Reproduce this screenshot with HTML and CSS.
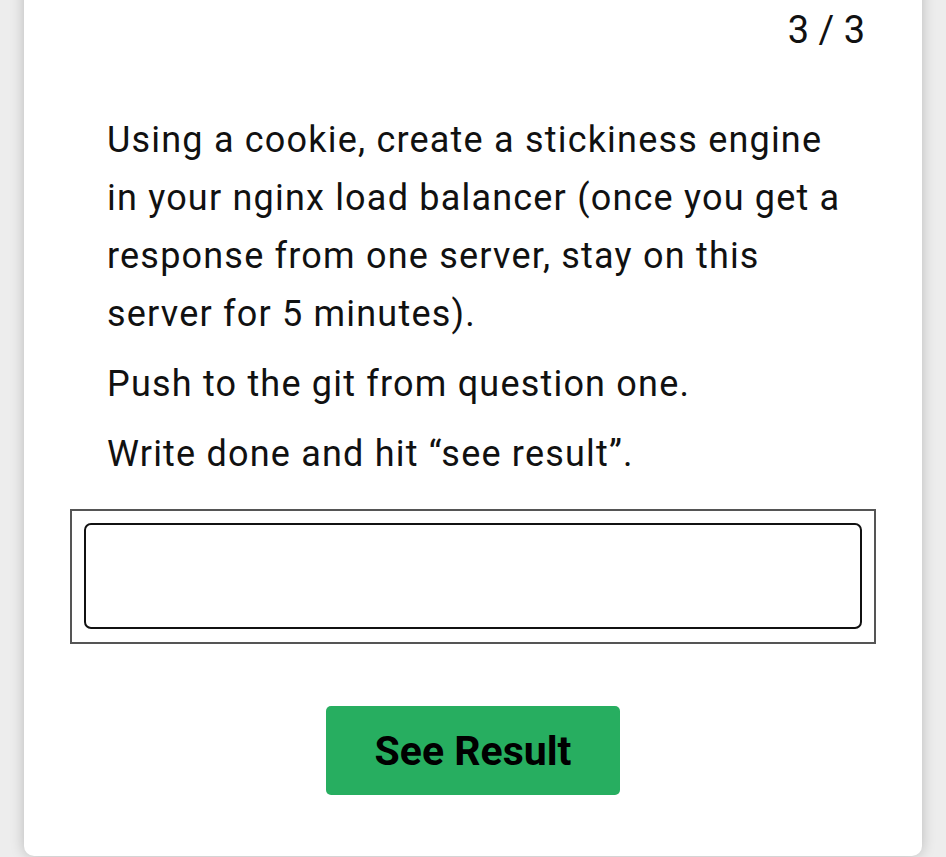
FILE: index.html
```html
<!DOCTYPE html>
<html lang="en">
<head>
<meta charset="utf-8">
<title>Question 3 / 3</title>
<link rel="stylesheet" href="styles.css">
</head>
<body>
  <main class="card">
    <div class="counter">3 / 3</div>
    <section class="question">
      <p>Using a cookie, create a stickiness engine in your nginx load balancer (once you get a response from one server, stay on this server for 5 minutes).</p>
      <p>Push to the git from question one.</p>
      <p>Write done and hit “see result”.</p>
    </section>
    <div class="answer-frame">
      <input class="answer-input" type="text" aria-label="Answer">
    </div>
    <div class="actions">
      <button class="result-btn" type="button">See Result</button>
    </div>
  </main>
</body>
</html>
```
FILE: styles.css
```css
html, body {
  margin: 0;
  padding: 0;
}

body {
  background: #ededed;
  font-family: Roboto, "Noto Sans", "Liberation Sans", sans-serif;
  color: #111;
  height: 857px;
  overflow: hidden;
}

.card {
  box-sizing: border-box;
  margin: -20px 24px 0 24px;
  height: 876px;
  background: #fff;
  border-radius: 10px;
  box-shadow: 0 0 14px rgba(0, 0, 0, 0.22);
  padding-top: 25px;
  display: flex;
  flex-direction: column;
}

.counter {
  text-align: right;
  font-size: 38px;
  line-height: 50px;
  padding-right: 57px;
  color: #111;
}

.question {
  margin-top: 56px;
  padding: 0 60px 0 83px;
}

.question p {
  margin: 0 0 12px 0;
  font-size: 36px;
  letter-spacing: 1.2px;
  line-height: 58px;
  color: #111;
}

.question p:last-child {
  margin-bottom: 0;
}

.answer-frame {
  margin: 26px 46px 0 46px;
  border: 2px solid #555;
  padding: 12px 12px 13px 12px;
  display: flex;
}

.answer-input {
  box-sizing: border-box;
  flex: 1;
  height: 106px;
  border: 2px solid #111;
  border-radius: 7px;
  background: #fff;
  font-family: inherit;
  font-size: 30px;
  padding: 0 16px;
  outline: none;
}

.actions {
  display: flex;
  justify-content: center;
  margin-top: 62px;
}

.result-btn {
  width: 294px;
  height: 89px;
  border: none;
  border-radius: 5px;
  background: #27ae60;
  color: #000;
  font-family: inherit;
  font-weight: 700;
  font-size: 41px;
  cursor: pointer;
}
```
